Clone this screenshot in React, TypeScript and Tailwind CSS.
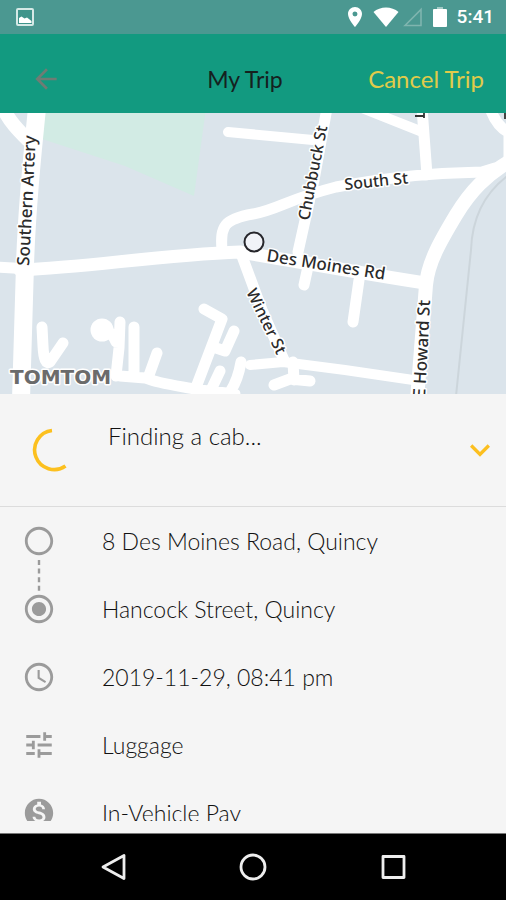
import React from "react";
import {
  MdAccessTime,
  MdArrowBack,
  MdExpandMore,
  MdLocationOn,
  MdMonetizationOn,
  MdRadioButtonChecked,
  MdRadioButtonUnchecked,
  MdTune,
} from "react-icons/md";

const details = [
  { icon: MdRadioButtonUnchecked, text: "8 Des Moines Road, Quincy" },
  { icon: MdRadioButtonChecked, text: "Hancock Street, Quincy" },
  { icon: MdAccessTime, text: "2019-11-29, 08:41 pm" },
  { icon: MdTune, text: "Luggage" },
  { icon: MdMonetizationOn, text: "In-Vehicle Pay" },
];

// road center lines, grouped by stroke width
const roads = [
  {
    width: 18,
    d: "M37 108C33 150 27 200 25 265L21 400",
  },
  {
    width: 14,
    d: "M3 108C10 122 18 130 28 140M515 158C485 175 470 192 456 215C441 240 428 262 426 285L417 400",
  },
  {
    width: 13,
    d: "M20 270C90 267 160 255 240 252C300 262 360 273 425 283",
  },
  {
    width: 11,
    d: "M327 108L314 180L298 252M309 262L304 285M359 280L353 322M-5 267L30 269M222 250C220 226 224 219 253 214C280 209 285 200 336 187C380 179 420 174 455 173L482 172L495 168M490 108C494 120 500 128 509 133L509 165M422 108L427 175M120 376L145 378C160 384 180 386 200 390L235 394M293 362L294 380M274 385L290 379L310 381M134 327L134 376M242 256L262 310L284 360M42 327L43 346Q44 366 50 362L63 343M120 322L119 348L116 376M104 329Q112 332 116 342M157 353L148 378M204 309L222 319L195 390M234 331L225 351L213 347M241 362Q238 380 230 392M220 371L211 390",
  },
  {
    width: 10,
    d: "M228 132L313 140M362 108L420 131M250 365L283 362L345 370L420 381",
  },
];

const labels = [
  { text: "Southern Artery", at: "translate(29 266) rotate(-87)", size: "text-[17px]" },
  { text: "Chubbuck St", at: "translate(309 221) rotate(-79)", size: "text-[16px]" },
  { text: "South St", at: "translate(345 190) rotate(-6)", size: "text-[16px]" },
  { text: "Des Moines Rd", at: "translate(266 261) rotate(9)", size: "text-[17px]" },
  { text: "Winter St", at: "translate(246 292) rotate(64)", size: "text-[16px]" },
  { text: "E Howard St", at: "translate(425 398) rotate(-87)", size: "text-[17px]" },
];

function StatusBar() {
  return (
    <div className="flex h-[34px] shrink-0 items-center justify-between bg-[#4b9891] pr-3 pl-4 text-white">
      <svg viewBox="0 0 18 18" className="size-[18px]" fill="none">
        <rect x="1" y="1" width="16" height="16" rx="1" stroke="#d5e9e6" strokeWidth="2" />
        <rect x="2" y="2" width="14" height="14" fill="#3f948b" />
        <path d="M3 15V10L5.5 8.5L8.5 10.5L11 9.5L15.5 13V15Z" fill="white" />
      </svg>
      <div className="flex items-center">
        <MdLocationOn className="mr-1.5 size-6" />
        <svg viewBox="0 0 26 20" className="mr-1 h-5 w-[26px]" fill="currentColor">
          <path d="M0.5 5C7-1 19-1 25.5 5L13 20Z" />
        </svg>
        <svg viewBox="0 0 20 20" className="mr-2.5 size-5" fill="none">
          <path d="M2 18.5L18 2.5V18.5Z" stroke="#7fb5af" strokeWidth="1.6" />
        </svg>
        <svg viewBox="0 0 14 20" className="mr-2.5 h-5 w-3.5">
          <path d="M4 0H10V3H4Z" fill="#a5cbc7" />
          <rect y="2" width="14" height="18" rx="1" fill="white" />
        </svg>
        <span className="font-['Roboto',sans-serif] text-[19px] font-medium">5:41</span>
      </div>
    </div>
  );
}

function TripMap() {
  return (
    <svg viewBox="0 113 506 281" className="block w-full shrink-0 bg-[#dbe4eb]" role="img" aria-label="Map">
      <path d="M42 108H206L194 196L125 166L42 139Z" fill="#d2ebe4" />
      <path
        d="M510 174C482 194 472 220 471 250L456 396"
        fill="none"
        stroke="#ccd5db"
        strokeWidth="2"
      />
      {roads.map((road) => (
        <path
          key={road.width}
          d={road.d}
          fill="none"
          stroke="white"
          strokeWidth={road.width}
          strokeLinecap="round"
          strokeLinejoin="round"
        />
      ))}
      <circle cx="102" cy="330" r="11.5" fill="white" />
      <path d="M415 116H424M424 113V118M505 113V119" stroke="#333" strokeWidth="1.8" />
      <g
        className="font-['Noto_Sans',sans-serif] font-medium"
        fill="#2b2b2b"
        stroke="white"
        strokeWidth="3"
        strokeLinejoin="round"
        paintOrder="stroke"
      >
        {labels.map((label) => (
          <text key={label.text} transform={label.at} className={label.size}>
            {label.text}
          </text>
        ))}
        <text x="10" y="384" fill="#6b6b6b" className="font-['DejaVu_Sans',sans-serif] text-[20px] font-bold">
          TOMTOM
        </text>
      </g>
      <circle cx="254" cy="242" r="9.5" fill="#f1f3f8" stroke="#26262b" strokeWidth="2" />
    </svg>
  );
}

function TripStatus() {
  return (
    <div className="flex shrink-0 items-center border-b border-[#dcdcdc] py-7 pr-1.5 pl-8">
      <svg viewBox="0 0 44 44" className="mr-8 size-11" fill="none">
        <path d="M20 2.5A19.6 19.6 0 1 0 33.5 38" stroke="#fcc01f" strokeWidth="3.6" />
      </svg>
      <p className="flex-1 pb-7 text-[24px] leading-7">Finding a cab...</p>
      <button type="button" aria-label="Show more" className="text-[#fcbf1f]">
        <MdExpandMore className="size-10" />
      </button>
    </div>
  );
}

function TripDetails() {
  return (
    <ul className="mb-3 min-h-0 flex-1 overflow-hidden">
      {details.map((item, i) => (
        <li key={item.text} className="relative flex h-[68px] items-center gap-[46px] pl-[22px]">
          <item.icon className="size-[34px] shrink-0 text-[#9b9b9b]" />
          <span>{item.text}</span>
          {i === 0 && (
            <svg viewBox="0 0 4 32" className="absolute top-[53px] left-[37px] h-8 w-1">
              <path d="M2 0V32" stroke="#9b9b9b" strokeWidth="2.4" strokeDasharray="5 3.6" />
            </svg>
          )}
        </li>
      ))}
    </ul>
  );
}

function NavBar() {
  return (
    <div className="flex h-[67px] shrink-0 items-center justify-center gap-28 border-t border-[#777] bg-black text-[#eee]">
      <button type="button" aria-label="Back">
        <svg viewBox="0 0 28 28" className="size-7" fill="none" stroke="currentColor" strokeWidth="2.8" strokeLinejoin="round">
          <path d="M25 2.5V25.5L4 14Z" />
        </svg>
      </button>
      <button type="button" aria-label="Home">
        <svg viewBox="0 0 28 28" className="size-7" fill="none" stroke="currentColor" strokeWidth="2.8">
          <circle cx="14" cy="14" r="12" />
        </svg>
      </button>
      <button type="button" aria-label="Recent apps">
        <svg viewBox="0 0 28 28" className="size-7" fill="none" stroke="currentColor" strokeWidth="2.8" strokeLinejoin="round">
          <rect x="4" y="3.5" width="21" height="21" />
        </svg>
      </button>
    </div>
  );
}

export default function App() {
  return (
    <div className="flex h-screen flex-col bg-[#f5f5f5] font-['Lato',sans-serif] text-[23px] leading-8 font-light text-[#111]">
      <StatusBar />
      <header className="grid shrink-0 grid-cols-[1fr_auto_1fr] items-center bg-[#129a80] px-[22px] pt-[29px] pb-[18px] font-normal">
        <button type="button" aria-label="Back" className="justify-self-start pl-2 text-[#6f7c74]">
          <MdArrowBack className="size-8" />
        </button>
        <h1 className="pr-4 text-[#15211e]">My Trip</h1>
        <button type="button" className="justify-self-end text-[24px] leading-8 text-[#e0cb4a]">
          Cancel Trip
        </button>
      </header>
      <TripMap />
      <TripStatus />
      <TripDetails />
      <NavBar />
    </div>
  );
}
